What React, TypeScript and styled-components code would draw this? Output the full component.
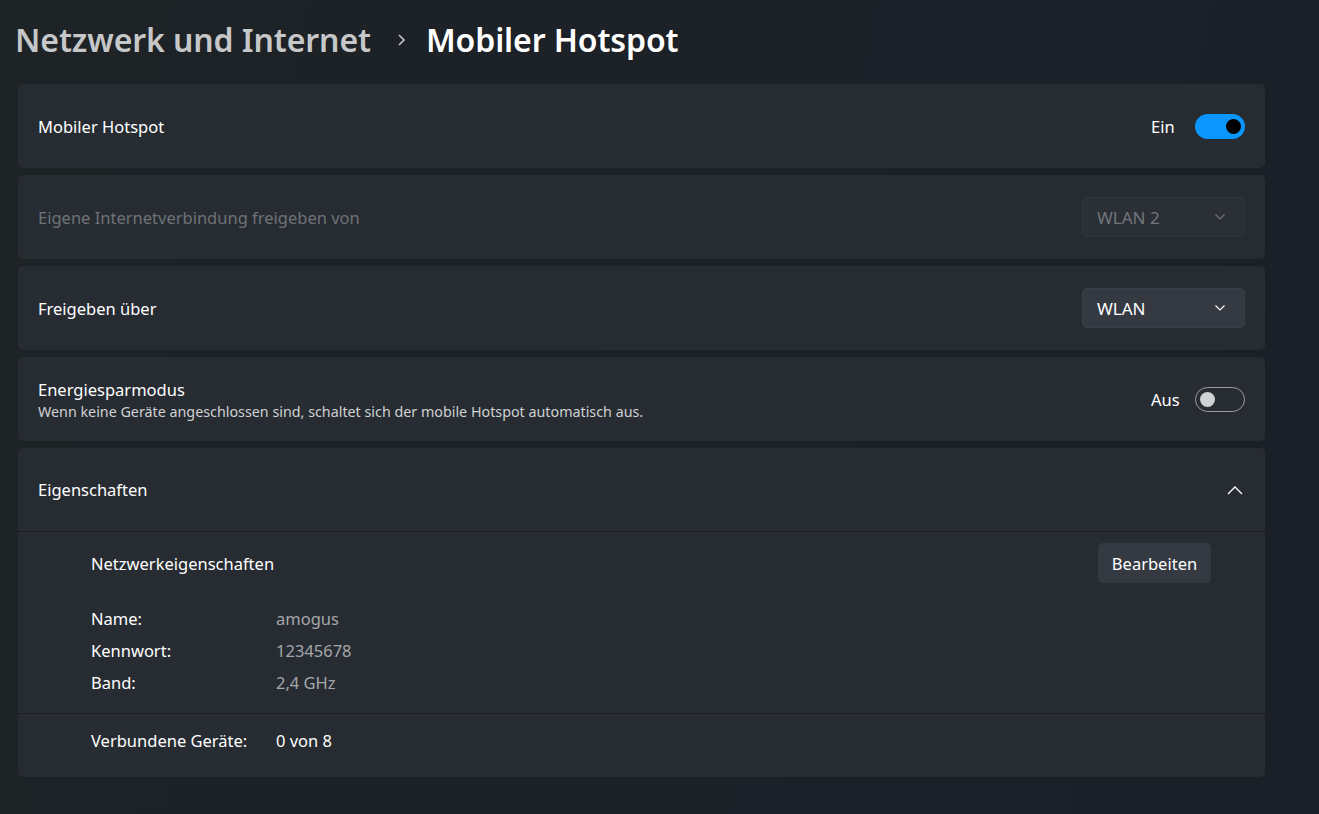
import React from 'react';
import styled, { createGlobalStyle } from 'styled-components';

const GlobalStyle = createGlobalStyle`
  html, body {
    margin: 0;
    padding: 0;
    background: #1c2027;
  }
  body {
    font-family: 'Noto Sans', 'Open Sans', sans-serif;
    color: #ffffff;
  }
`;

const Page = styled.div`
  width: 1319px;
  height: 814px;
  overflow: hidden;
  box-sizing: border-box;
  padding: 13px 54px 0 18px;
  background: linear-gradient(100deg, #1e2326 0%, #1c2129 60%, #1b1f28 100%);
`;

const Breadcrumb = styled.h1`
  display: flex;
  align-items: center;
  margin: 0 0 19px -3px;
  height: 52px;
  font-size: 32px;
  font-weight: 600;
  letter-spacing: -0.1px;

  svg {
    margin: 2px 20px 0 26px;
  }
`;

const Crumb = styled.span<{ current?: boolean }>`
  color: ${(p) => (p.current ? '#ffffff' : '#c5c7c9')};
`;

const List = styled.div`
  display: flex;
  flex-direction: column;
  gap: 7px;
`;

const Card = styled.div`
  display: flex;
  align-items: center;
  justify-content: space-between;
  height: 84px;
  box-sizing: border-box;
  padding: 0 20px;
  border-radius: 5px;
  background: #272c32;
`;

const Label = styled.div<{ disabled?: boolean }>`
  font-size: 16.5px;
  color: ${(p) => (p.disabled ? '#6e7277' : '#ffffff')};
`;

const Sub = styled.div`
  margin-top: 1px;
  font-size: 14.3px;
  color: #cfd1d3;
`;

const Control = styled.div`
  display: flex;
  align-items: center;
  font-size: 16.5px;
`;

const State = styled.span`
  width: 44px;
`;

const Toggle = styled.div<{ on?: boolean }>`
  width: 50px;
  height: 25px;
  box-sizing: border-box;
  border-radius: 13px;
  display: flex;
  align-items: center;
  padding: 0 4px;
  justify-content: ${(p) => (p.on ? 'flex-end' : 'flex-start')};
  background: ${(p) => (p.on ? '#0a95ff' : 'transparent')};
  border: ${(p) => (p.on ? 'none' : '1px solid #9a9c9f')};
`;

const Knob = styled.div<{ on?: boolean }>`
  width: 15px;
  height: 15px;
  border-radius: 50%;
  background: ${(p) => (p.on ? '#000000' : '#d0d1d2')};
`;

const Select = styled.div<{ disabled?: boolean }>`
  width: 163px;
  height: 40px;
  box-sizing: border-box;
  display: flex;
  align-items: center;
  justify-content: space-between;
  padding: 0 18px 0 14px;
  border-radius: 5px;
  font-size: 17px;
  color: ${(p) => (p.disabled ? '#72767b' : '#ffffff')};
  background: ${(p) => (p.disabled ? '#2b2f36' : '#353942')};
  border: 1px solid ${(p) => (p.disabled ? '#30343b' : '#3a3e46')};
`;

const Expander = styled.div`
  border-radius: 5px;
  background: #272c32;
  overflow: hidden;
`;

const ExpanderHead = styled(Card)`
  height: 84px;
  border-radius: 0;
  border-bottom: 1px solid #1b1e22;
  padding-right: 22px;
`;

const Section = styled.div<{ last?: boolean }>`
  padding: ${(p) => (p.last ? '16px 73px 0' : '11px 54px 19px 73px')};
  height: ${(p) => (p.last ? '63px' : 'auto')};
  box-sizing: border-box;
  border-bottom: ${(p) => (p.last ? 'none' : '1px solid #1b1e22')};
`;

const SectionHead = styled.div`
  display: flex;
  align-items: center;
  justify-content: space-between;
  margin-bottom: 25px;
`;

const Button = styled.div`
  width: 113px;
  height: 40px;
  display: flex;
  align-items: center;
  justify-content: center;
  border-radius: 5px;
  background: #353942;
  font-size: 16.5px;
`;

const PropGrid = styled.div`
  display: grid;
  grid-template-columns: 185px 1fr;
  row-gap: 10px;
  font-size: 16.5px;
  line-height: 22px;
`;

const Value = styled.span<{ muted?: boolean }>`
  color: ${(p) => (p.muted ? '#a4a7aa' : '#ffffff')};
`;

const ChevronDown = () => (
  <svg width="12" height="8" viewBox="0 0 12 8" fill="none">
    <path d="M1.5 1.5 L6 6 L10.5 1.5" stroke="currentColor" strokeWidth="1.1" />
  </svg>
);

const ChevronUp = () => (
  <svg width="16" height="10" viewBox="0 0 16 10" fill="none">
    <path d="M1 9 L8 2 L15 9" stroke="#ffffff" strokeWidth="1.3" />
  </svg>
);

const ChevronRight = () => (
  <svg width="9" height="14" viewBox="0 0 9 14" fill="none">
    <path d="M2 2 L7 7 L2 12" stroke="#c5c7c9" strokeWidth="1.6" />
  </svg>
);

export default function App() {
  return (
    <>
      <GlobalStyle />
      <Page>
        <Breadcrumb>
          <Crumb>Netzwerk und Internet</Crumb>
          <ChevronRight />
          <Crumb current>Mobiler Hotspot</Crumb>
        </Breadcrumb>
        <List>
          <Card>
            <Label>Mobiler Hotspot</Label>
            <Control>
              <State>Ein</State>
              <Toggle on>
                <Knob on />
              </Toggle>
            </Control>
          </Card>
          <Card>
            <Label disabled>Eigene Internetverbindung freigeben von</Label>
            <Select disabled>
              <span>WLAN 2</span>
              <ChevronDown />
            </Select>
          </Card>
          <Card>
            <Label>Freigeben über</Label>
            <Select>
              <span>WLAN</span>
              <ChevronDown />
            </Select>
          </Card>
          <Card>
            <div>
              <Label>Energiesparmodus</Label>
              <Sub>Wenn keine Geräte angeschlossen sind, schaltet sich der mobile Hotspot automatisch aus.</Sub>
            </div>
            <Control>
              <State>Aus</State>
              <Toggle>
                <Knob />
              </Toggle>
            </Control>
          </Card>
          <Expander>
            <ExpanderHead>
              <Label>Eigenschaften</Label>
              <ChevronUp />
            </ExpanderHead>
            <Section>
              <SectionHead>
                <Label>Netzwerkeigenschaften</Label>
                <Button>Bearbeiten</Button>
              </SectionHead>
              <PropGrid>
                <span>Name:</span>
                <Value muted>amogus</Value>
                <span>Kennwort:</span>
                <Value muted>12345678</Value>
                <span>Band:</span>
                <Value muted>2,4 GHz</Value>
              </PropGrid>
            </Section>
            <Section last>
              <PropGrid>
                <span>Verbundene Geräte:</span>
                <Value>0 von 8</Value>
              </PropGrid>
            </Section>
          </Expander>
        </List>
      </Page>
    </>
  );
}
